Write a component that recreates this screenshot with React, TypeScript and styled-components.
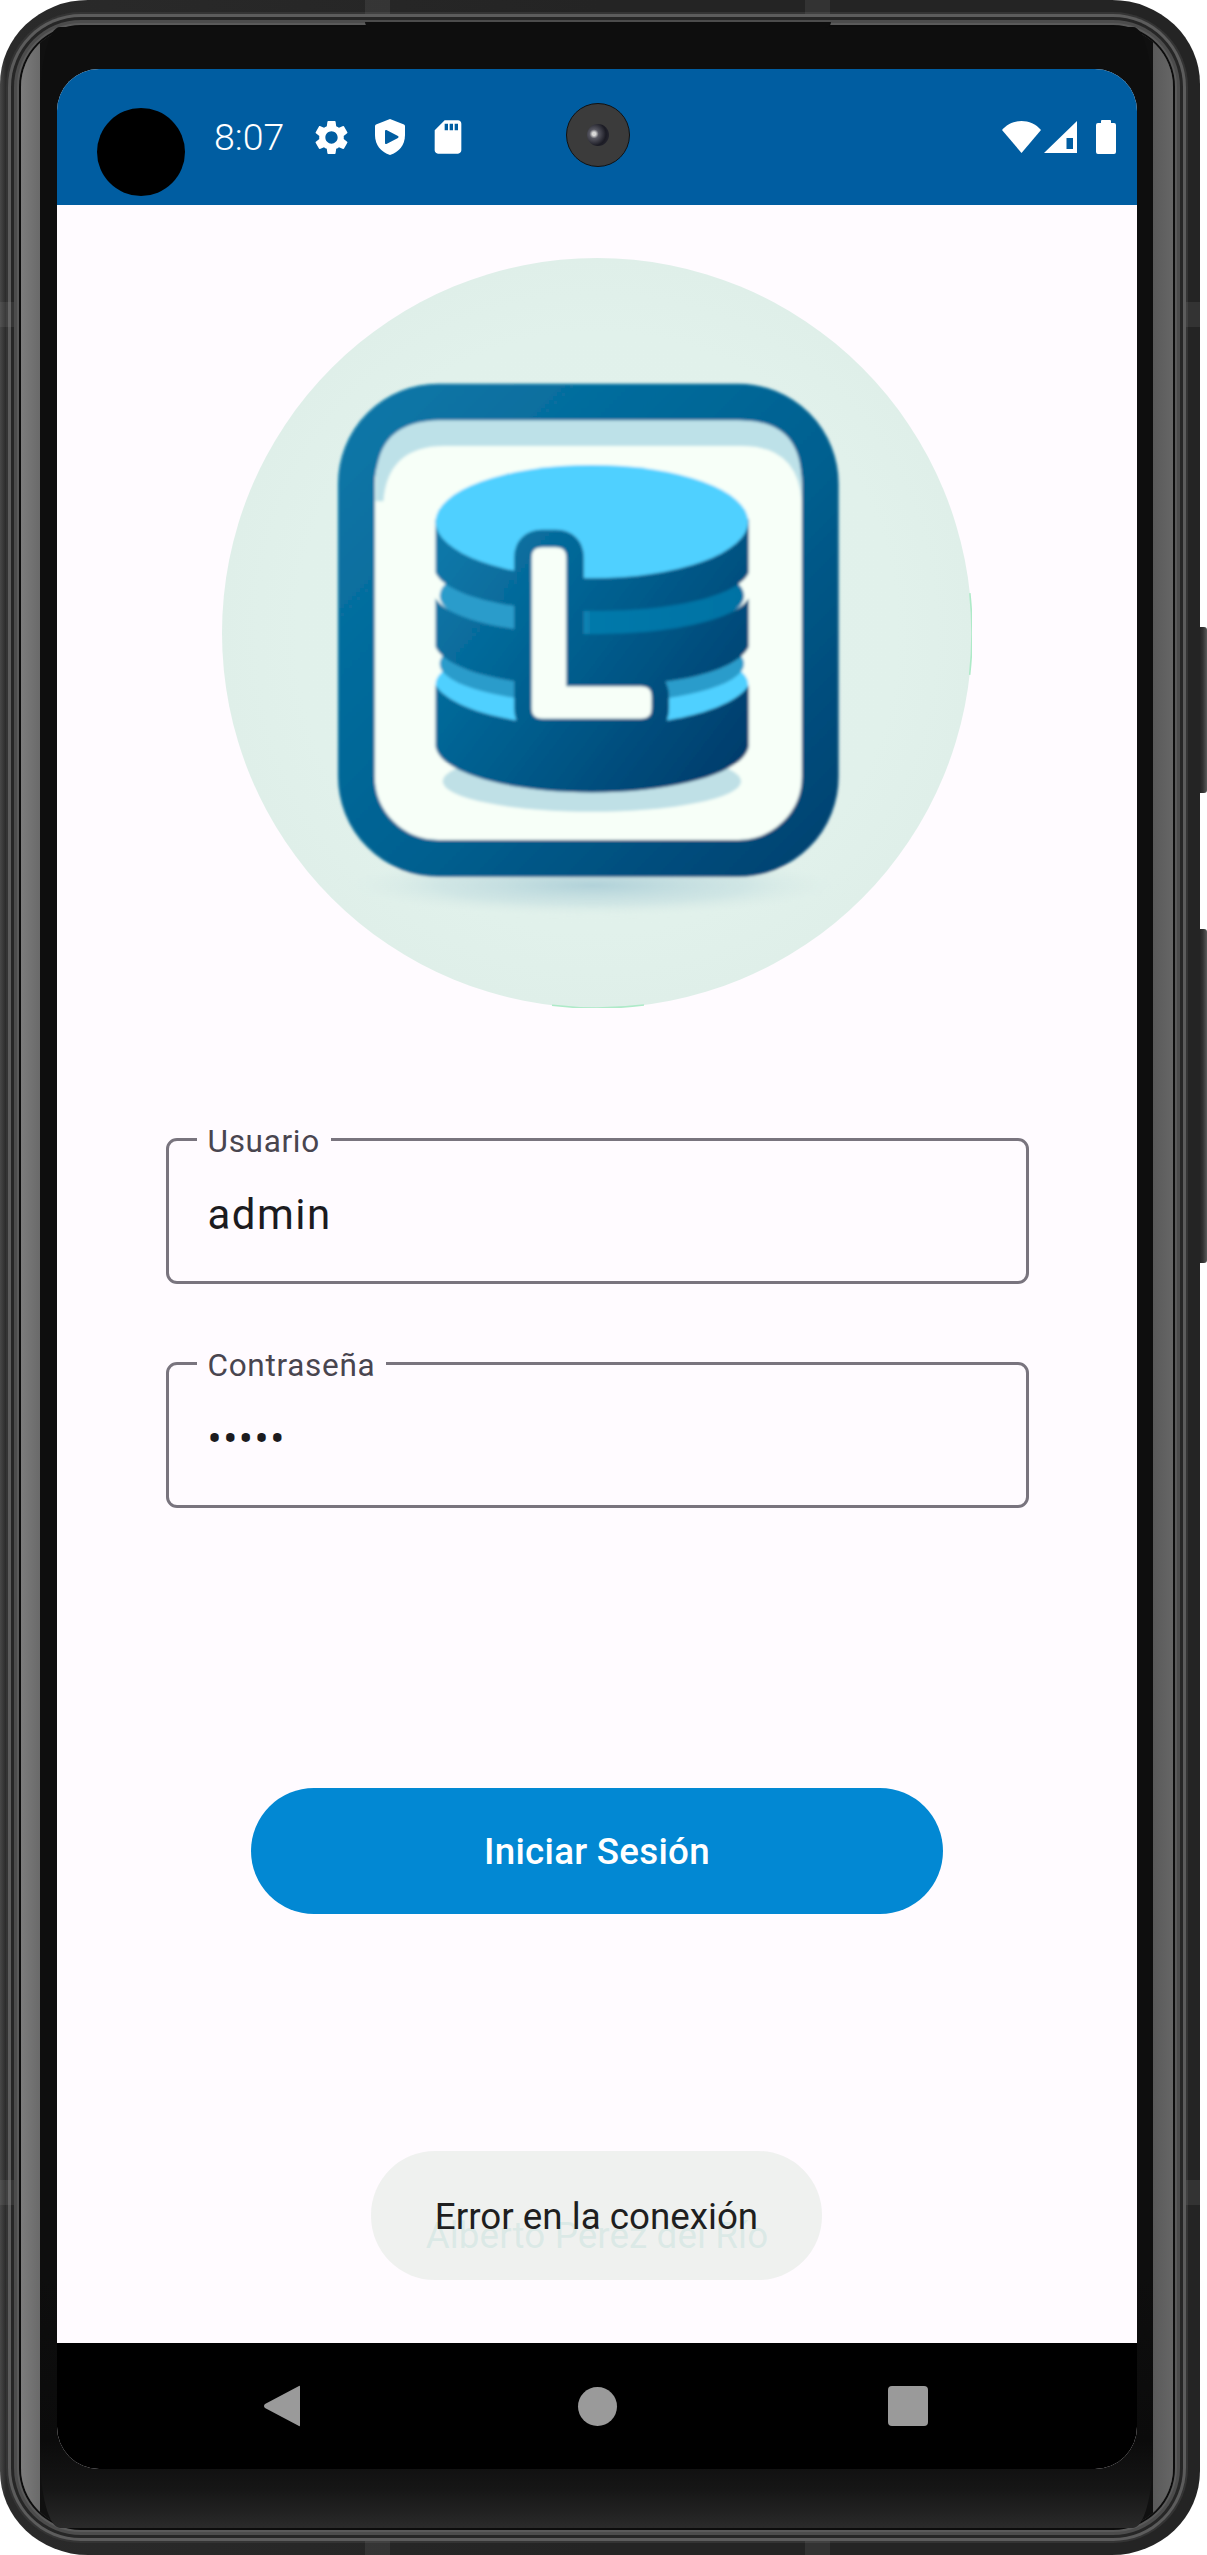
import React from "react";
import styled, { createGlobalStyle } from "styled-components";
import { MdSettings, MdSdCard } from "react-icons/md";

const Global = createGlobalStyle`
  html, body { margin: 0; padding: 0; background: #fff; }
  body { width: 1207px; height: 2555px; overflow: hidden; font-family: Roboto, "Liberation Sans", sans-serif; }
  * { box-sizing: border-box; }
`;

const Stage = styled.div`
  position: relative;
  width: 1207px;
  height: 2555px;
`;

const SideKey = styled.div<{ $top: number; $height: number }>`
  position: absolute;
  right: 0;
  top: ${(p) => p.$top}px;
  width: 9px;
  height: ${(p) => p.$height}px;
  border-radius: 0 3px 3px 0;
  background: linear-gradient(90deg, #1c1c1c 0%, #333 55%, #5a5a5a 100%);
`;

const Phone = styled.div`
  position: relative;
  width: 1200px;
  height: 2555px;
  padding: 27px 27px 27px 21px;
  border-radius: 88px / 84px;
  background: linear-gradient(90deg, #484848 0, #2a2a2a 6px, #242424 50%, #242424 100%);
`;

const Band = styled.div<{ $left?: number; $right?: number; $top?: number; $bottom?: number; $vertical?: boolean }>`
  position: absolute;
  z-index: 1;
  ${(p) => (p.$left !== undefined ? `left:${p.$left}px;` : "")}
  ${(p) => (p.$right !== undefined ? `right:${p.$right}px;` : "")}
  ${(p) => (p.$top !== undefined ? `top:${p.$top}px;` : "")}
  ${(p) => (p.$bottom !== undefined ? `bottom:${p.$bottom}px;` : "")}
  width: ${(p) => (p.$vertical ? "14px" : "25px")};
  height: ${(p) => (p.$vertical ? "25px" : "14px")};
  background: rgba(150, 150, 150, 0.14);
`;

const Speaker = styled.div`
  position: absolute;
  z-index: 2;
  left: 344px;
  top: -5px;
  width: 466px;
  height: 6px;
  border-radius: 0 0 6px 6px;
  background: #0e0e0e;
`;

const Glass = styled.div`
  position: relative;
  width: 100%;
  height: 100%;
  padding: 0 20px 0 19px;
  border-radius: 60px;
  background: linear-gradient(90deg, #7c7c7c 0, #6a6a6a 19px, #101010 19px, #101010 1132px, #5a5a5a 1132px, #666 100%);
  box-shadow:
    0 0 0 2px #0c0c0c,
    0 0 0 4px #5a5a5a,
    0 0 0 7px #4c4c4c,
    0 0 0 10px #262626,
    0 0 0 13px #5c5c5c,
    0 0 0 15px #343434;
`;

const Bezel = styled.div`
  width: 100%;
  height: 100%;
  padding: 42px 16px 0 17px;
  border-radius: 20px / 75px;
  background: linear-gradient(180deg, #0e0e0e 0, #0e0e0e 90%, #0b0b0b 96.5%, #161616 98.5%, #2a2a2a 100%);
`;

const Screen = styled.div`
  position: relative;
  display: flex;
  flex-direction: column;
  width: 1080px;
  height: 2400px;
  overflow: hidden;
  border-radius: 42px;
  background: #fffbff;
`;

const StatusBar = styled.div`
  display: flex;
  align-items: center;
  flex: 0 0 136px;
  padding: 0 21px 0 157px;
  background: #005da1;
  color: #fff;
`;

const Clock = styled.span`
  width: 90px;
  margin-right: 7px;
  font-size: 37.5px;
  font-weight: 350;
`;

const StatusGlyph = styled.span<{ $width: number; $gap?: number }>`
  display: flex;
  align-items: center;
  justify-content: center;
  width: ${(p) => p.$width}px;
  margin-left: ${(p) => p.$gap ?? 0}px;
`;

const Spacer = styled.div`
  flex: 1;
`;

const PunchHole = styled.div`
  position: absolute;
  left: 40px;
  top: 39px;
  width: 88px;
  height: 88px;
  border-radius: 50%;
  background: #000;
`;

const Camera = styled.div`
  position: absolute;
  left: 509px;
  top: 34px;
  width: 64px;
  height: 64px;
  border-radius: 50%;
  border: 1.5px solid #111;
  background: #3b3b3b;
  display: flex;
  align-items: center;
  justify-content: center;
`;

const Lens = styled.div`
  width: 22px;
  height: 22px;
  border-radius: 50%;
  background: radial-gradient(circle at 32% 45%, #d8d8d8 0 9%, #565660 24%, #1b1b24 62%, #30303a 100%);
`;

const Content = styled.main`
  flex: 1;
  display: flex;
  flex-direction: column;
  align-items: center;
  padding-top: 53px;
  background: #fffbff;
`;

const Logo = styled.svg`
  display: block;
  flex: none;
  width: 750px;
  height: 750px;
`;

const Fields = styled.div`
  display: flex;
  flex-direction: column;
  gap: 78px;
  width: 863px;
  margin-top: 130px;
`;

const Field = styled.div`
  position: relative;
  height: 146px;
  padding: 6px 39px 0;
  border: 3px solid #79747e;
  border-radius: 11px;
  display: flex;
  align-items: center;
`;

const FieldLabel = styled.label`
  position: absolute;
  left: 28px;
  top: -18px;
  padding: 0 11px;
  background: linear-gradient(180deg, transparent 0 14px, #fffbff 14px);
  color: #49454f;
  font-size: 31.5px;
  font-weight: 400;
  line-height: 37px;
  letter-spacing: 0.7px;
`;

const FieldInput = styled.input`
  width: 100%;
  border: 0;
  outline: 0;
  padding: 0;
  background: transparent;
  color: #1c1b1f;
  font-family: Roboto, "Liberation Sans", sans-serif;
  font-size: 42px;
  font-weight: 400;
  letter-spacing: 1.5px;
`;

const LoginButton = styled.button`
  width: 692px;
  height: 126px;
  margin-top: 280px;
  padding-top: 2px;
  border: 0;
  border-radius: 63px;
  background: #0288d3;
  color: #fff;
  font-family: Roboto, "Liberation Sans", sans-serif;
  font-size: 36.75px;
  font-weight: 500;
  letter-spacing: 0.26px;
`;

const Credit = styled.div`
  margin-top: 300px;
  color: rgb(55, 171, 165);
  font-size: 36.75px;
  font-weight: 400;
  line-height: 44px;
  letter-spacing: 0.1px;
`;

const Toast = styled.div`
  position: absolute;
  left: 314px;
  bottom: 189px;
  display: flex;
  align-items: center;
  justify-content: center;
  width: 451px;
  height: 129px;
  padding-top: 2px;
  border-radius: 64px;
  background: rgba(237, 239, 237, 0.9);
  color: #1f1f1f;
  font-size: 36.75px;
  font-weight: 400;
`;

const NavBar = styled.nav`
  display: flex;
  align-items: center;
  flex: 0 0 126px;
  padding-left: 205px;
  background: #000;
`;

const NavBack = styled.svg`
  width: 40px;
  height: 44px;
`;

const NavHome = styled.div`
  width: 39px;
  height: 39px;
  margin-left: 276px;
  border-radius: 50%;
  background: #9a9a9a;
`;

const NavRecents = styled.div`
  width: 40px;
  height: 40px;
  margin-left: 271px;
  border-radius: 4px;
  background: #9a9a9a;
`;

function LogoArt() {
  return (
    <Logo viewBox="44 34 1468 1468" aria-label="Logo">
      <defs>
        <linearGradient id="frameGrad" gradientUnits="userSpaceOnUse" x1="300" y1="300" x2="1240" y2="1240">
          <stop offset="0" stopColor="#0777a8" />
          <stop offset="0.55" stopColor="#056090" />
          <stop offset="1" stopColor="#033f6e" />
        </linearGradient>
        <linearGradient id="bodyGrad" gradientUnits="userSpaceOnUse" x1="470" y1="620" x2="1060" y2="1070">
          <stop offset="0" stopColor="#0777a8" />
          <stop offset="0.5" stopColor="#055a8a" />
          <stop offset="1" stopColor="#023a69" />
        </linearGradient>
        <linearGradient id="bandGrad" gradientUnits="userSpaceOnUse" x1="470" y1="0" x2="1060" y2="0">
          <stop offset="0" stopColor="#2a9ccb" />
          <stop offset="0.45" stopColor="#2a9ccb" />
          <stop offset="0.5" stopColor="#0679aa" />
          <stop offset="1" stopColor="#0472a4" />
        </linearGradient>
        <radialGradient id="discGrad" cx="0.5" cy="0.5" r="0.5">
          <stop offset="0" stopColor="#e2f2ec" />
          <stop offset="0.8" stopColor="#e1f1eb" />
          <stop offset="1" stopColor="#dfefe9" />
        </radialGradient>
        <radialGradient id="floorGrad" cx="0.5" cy="0.5" r="0.5">
          <stop offset="0" stopColor="#a4c9d4" stopOpacity="0.8" />
          <stop offset="0.6" stopColor="#bcd9dd" stopOpacity="0.45" />
          <stop offset="1" stopColor="#dfefe9" stopOpacity="0" />
        </radialGradient>
        <filter id="soft" x="-5%" y="-5%" width="110%" height="110%">
          <feGaussianBlur stdDeviation="2.8" />
        </filter>
      </defs>
      <circle cx="778" cy="768" r="734" fill="url(#discGrad)" />
      <path d="M1507.8 690 A734 734 0 0 1 1507.4 850" fill="none" stroke="#aeeac8" strokeWidth="3" />
      <path d="M690 1496.7 A734 734 0 0 0 870 1496.2" fill="none" stroke="#aeeac8" strokeWidth="3" />
      <g filter="url(#soft)">
        <ellipse cx="770" cy="1262" rx="505" ry="62" fill="url(#floorGrad)" />
        <rect x="307" y="316" width="908" height="893" rx="160" fill="#f7fff8" stroke="url(#frameGrad)" strokeWidth="72" />
        <path d="M345 510 V470 Q347 352 470 352 H1060 Q1178 352 1178 470 V510 Q1172 402 1060 402 H480 Q368 402 360 510 Z" fill="#bde1e8" />
        <ellipse cx="768" cy="1058" rx="292" ry="60" fill="#bfe0e6" />
        <ellipse cx="768" cy="868" rx="306" ry="84" fill="#50d0ff" />
        <ellipse cx="768" cy="828" rx="298" ry="78" fill="#2a9ccb" />
        <path d="M462 870 V990 C470 1040 600 1080 768 1080 C936 1080 1066 1040 1075 990 V870 C1055 905 960 950 768 950 C576 950 482 905 462 870 Z" fill="url(#bodyGrad)" />
        <ellipse cx="768" cy="695" rx="298" ry="85" fill="url(#bandGrad)" />
        <path d="M462 700 V795 C480 835 580 872 768 872 C956 872 1057 835 1075 795 V700 C1055 735 950 770 768 770 C586 770 482 735 462 700 Z" fill="url(#bodyGrad)" />
        <path d="M462 545 V650 C480 690 590 725 768 725 C946 725 1057 690 1075 650 V545 Z" fill="url(#bodyGrad)" />
        <ellipse cx="768" cy="550" rx="306" ry="111" fill="#50d0ff" />
        <path d="M670 600 H698 Q718 600 718 620 V872 H865 Q885 872 885 892 V916 Q885 936 865 936 H670 Q650 936 650 916 V620 Q650 600 670 600 Z" fill="#f7fff8" stroke="url(#bodyGrad)" strokeWidth="68" strokeLinejoin="round" paintOrder="stroke" />
      </g>
    </Logo>
  );
}

export default function App() {
  return (
    <Stage>
      <Global />
      <SideKey $top={627} $height={166} />
      <SideKey $top={929} $height={334} />
      <Phone>
        <Band $top={0} $left={365} />
        <Band $top={0} $left={805} />
        <Band $bottom={0} $left={365} />
        <Band $bottom={0} $left={805} />
        <Band $right={0} $top={302} $vertical />
        <Band $left={0} $top={302} $vertical />
        <Band $right={0} $bottom={350} $vertical />
        <Band $left={0} $bottom={350} $vertical />
        <Glass>
          <Speaker />
          <Bezel>
            <Screen>
              <StatusBar>
                <Clock>8:07</Clock>
                <StatusGlyph $width={41}>
                  <MdSettings size={41} color="#fff" />
                </StatusGlyph>
                <StatusGlyph $width={30} $gap={23}>
                  <svg width="30" height="36" viewBox="0 0 30 36">
                    <path d="M15 0 L29 5.5 Q30 6 30 7 V16 C30 26 24 33 15 36 C6 33 0 26 0 16 V7 Q0 6 1 5.5 Z" fill="#fff" />
                    <path d="M11 12 L22.5 18 L11 24 Z" fill="#005da1" stroke="#005da1" strokeWidth="2" strokeLinejoin="round" />
                  </svg>
                </StatusGlyph>
                <StatusGlyph $width={40} $gap={23}>
                  <MdSdCard size={40} color="#fff" />
                </StatusGlyph>
                <Spacer />
                <StatusGlyph $width={39}>
                  <svg width="39" height="32" viewBox="0 0 39 32">
                    <path d="M0 9 C10 -3 29 -3 39 9 L19.5 32 Z" fill="#fff" />
                  </svg>
                </StatusGlyph>
                <StatusGlyph $width={33} $gap={3}>
                  <svg width="33" height="32" viewBox="0 0 33 32">
                    <path fillRule="evenodd" d="M33 0 V32 H0 Z M29 17 H22.5 V28 H29 Z" fill="#fff" />
                  </svg>
                </StatusGlyph>
                <StatusGlyph $width={20} $gap={19}>
                  <svg width="20" height="34" viewBox="0 0 20 34">
                    <path d="M5 3 V1 Q5 0 6 0 H14 Q15 0 15 1 V3 H18 Q20 3 20 5 V32 Q20 34 18 34 H2 Q0 34 0 32 V5 Q0 3 2 3 Z" fill="#fff" />
                  </svg>
                </StatusGlyph>
              </StatusBar>
              <PunchHole />
              <Camera>
                <Lens />
              </Camera>
              <Content>
                <LogoArt />
                <Fields>
                  <Field>
                    <FieldLabel>Usuario</FieldLabel>
                    <FieldInput type="text" value="admin" readOnly />
                  </Field>
                  <Field>
                    <FieldLabel>Contraseña</FieldLabel>
                    <FieldInput type="password" value="admin" readOnly />
                  </Field>
                </Fields>
                <LoginButton>Iniciar Sesión</LoginButton>
                <Credit>Alberto Pérez del Río</Credit>
              </Content>
              <Toast>Error en la conexión</Toast>
              <NavBar>
                <NavBack viewBox="0 0 40 44">
                  <path d="M37 2 Q38 1 38 3 V41 Q38 43 37 42 L3 24 Q1 22 3 20 Z" fill="#9a9a9a" />
                </NavBack>
                <NavHome />
                <NavRecents />
              </NavBar>
            </Screen>
          </Bezel>
        </Glass>
      </Phone>
    </Stage>
  );
}
